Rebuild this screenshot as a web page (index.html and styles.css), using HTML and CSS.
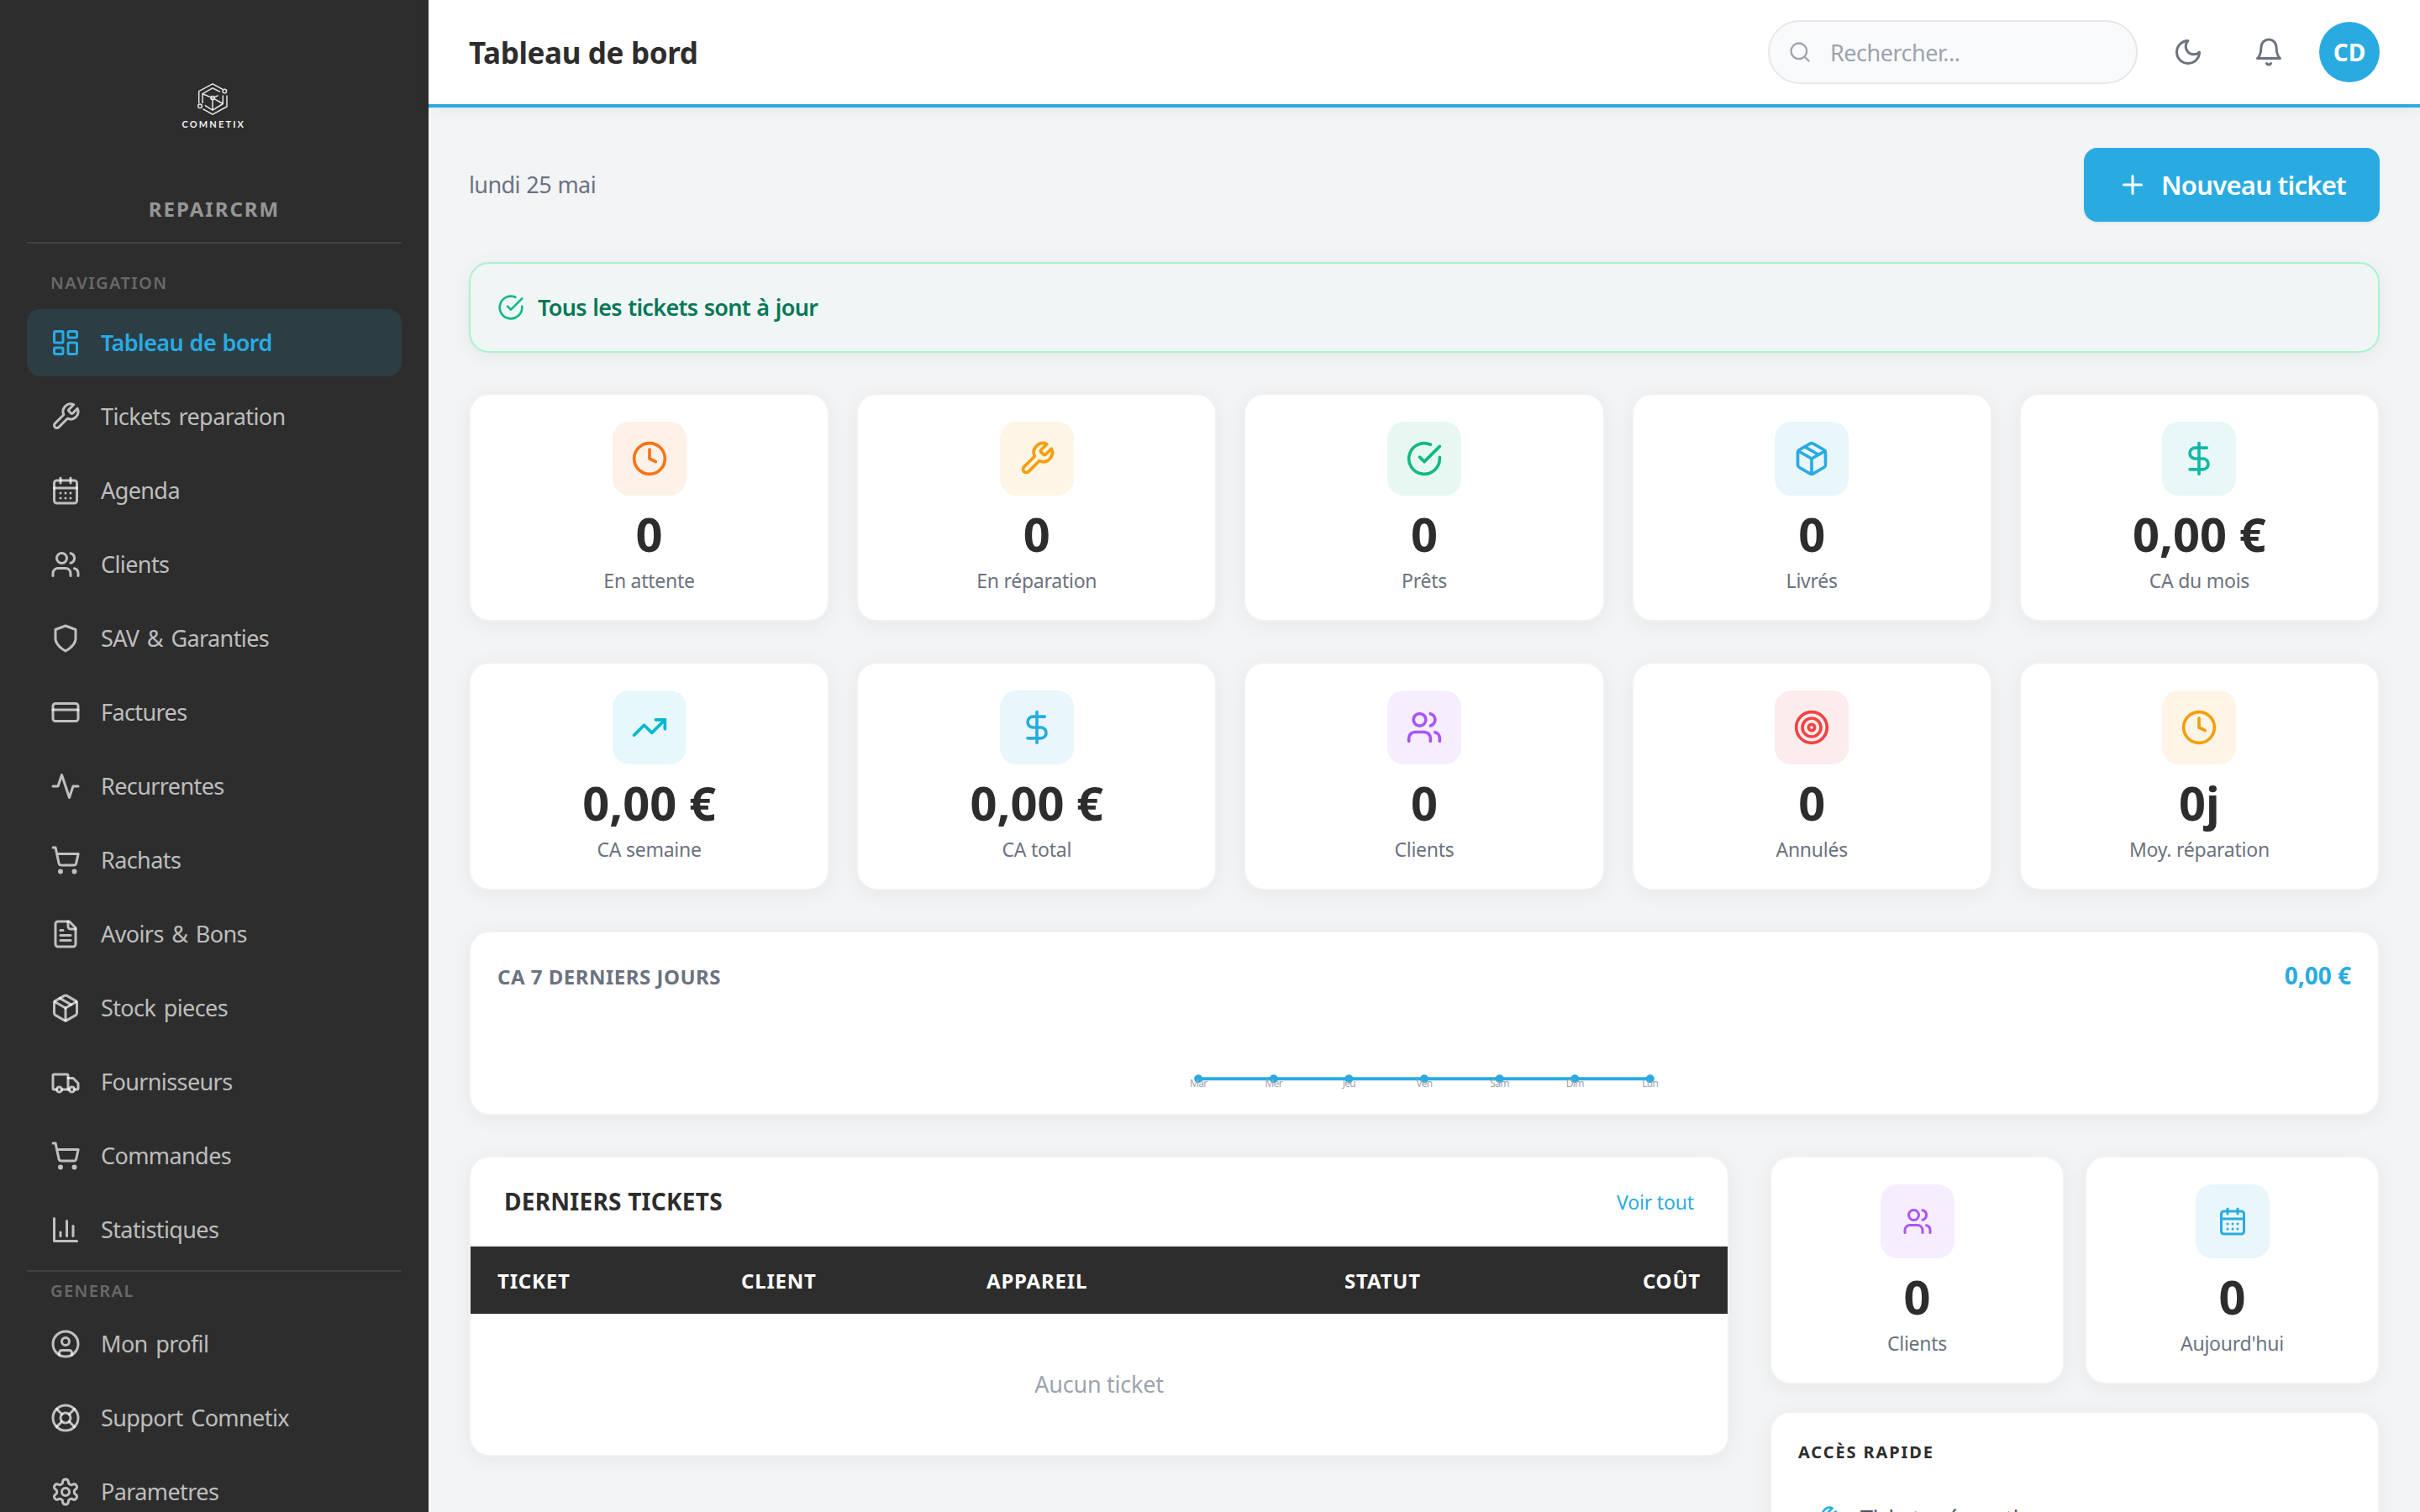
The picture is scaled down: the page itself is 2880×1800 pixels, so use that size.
FILE: index.html
```html
<!DOCTYPE html>
<html lang="fr">

<head>
    <meta charset="UTF-8" />
    <meta name="viewport" content="width=device-width, initial-scale=1.0" />
    <title>Tableau de bord - RepairCRM</title>

    <link rel="stylesheet" href="styles.css">
</head>

<body>

    <!-- Icons -->
    <svg class="sprite">
        <symbol id="i-dashboard" viewBox="0 0 24 24"><rect width="7" height="9" x="3" y="3" rx="1" /><rect width="7" height="5" x="14" y="3" rx="1" /><rect width="7" height="9" x="14" y="12" rx="1" /><rect width="7" height="5" x="3" y="16" rx="1" /></symbol>
        <symbol id="i-wrench" viewBox="0 0 24 24"><path d="M14.7 6.3a1 1 0 0 0 0 1.4l1.6 1.6a1 1 0 0 0 1.4 0l3.77-3.77a6 6 0 0 1-7.94 7.94l-6.91 6.91a2.12 2.12 0 0 1-3-3l6.91-6.91a6 6 0 0 1 7.94-7.94l-3.76 3.76z" /></symbol>
        <symbol id="i-calendar" viewBox="0 0 24 24"><path d="M8 2v4" /><path d="M16 2v4" /><rect width="18" height="18" x="3" y="4" rx="2" /><path d="M3 10h18" /><path d="M8 14h.01" /><path d="M12 14h.01" /><path d="M16 14h.01" /><path d="M8 18h.01" /><path d="M12 18h.01" /><path d="M16 18h.01" /></symbol>
        <symbol id="i-users" viewBox="0 0 24 24"><path d="M16 21v-2a4 4 0 0 0-4-4H6a4 4 0 0 0-4 4v2" /><circle cx="9" cy="7" r="4" /><path d="M22 21v-2a4 4 0 0 0-3-3.87" /><path d="M16 3.13a4 4 0 0 1 0 7.75" /></symbol>
        <symbol id="i-shield" viewBox="0 0 24 24"><path d="M12 22s8-4 8-10V5l-8-3-8 3v7c0 6 8 10 8 10" /></symbol>
        <symbol id="i-card" viewBox="0 0 24 24"><rect width="20" height="14" x="2" y="5" rx="2" /><path d="M2 10h20" /></symbol>
        <symbol id="i-activity" viewBox="0 0 24 24"><path d="M22 12h-4l-3 9L9 3l-3 9H2" /></symbol>
        <symbol id="i-cart" viewBox="0 0 24 24"><circle cx="8" cy="21" r="1" /><circle cx="19" cy="21" r="1" /><path d="M2.05 2.05h2l2.66 12.42a2 2 0 0 0 2 1.58h9.78a2 2 0 0 0 1.95-1.57l1.65-7.43H5.12" /></symbol>
        <symbol id="i-file" viewBox="0 0 24 24"><path d="M15 2H6a2 2 0 0 0-2 2v16a2 2 0 0 0 2 2h12a2 2 0 0 0 2-2V7Z" /><path d="M14 2v4a2 2 0 0 0 2 2h4" /><path d="M10 9H8" /><path d="M16 13H8" /><path d="M16 17H8" /></symbol>
        <symbol id="i-package" viewBox="0 0 24 24"><path d="m7.5 4.27 9 5.15" /><path d="M21 8a2 2 0 0 0-1-1.73l-7-4a2 2 0 0 0-2 0l-7 4A2 2 0 0 0 3 8v8a2 2 0 0 0 1 1.73l7 4a2 2 0 0 0 2 0l7-4A2 2 0 0 0 21 16Z" /><path d="m3.3 7 8.7 5 8.7-5" /><path d="M12 22V12" /></symbol>
        <symbol id="i-truck" viewBox="0 0 24 24"><path d="M5 18H3c-.6 0-1-.4-1-1V7c0-.6.4-1 1-1h10c.6 0 1 .4 1 1v11" /><path d="M14 9h4l4 4v4c0 .6-.4 1-1 1h-2" /><circle cx="7" cy="18" r="2" /><path d="M15 18H9" /><circle cx="17" cy="18" r="2" /></symbol>
        <symbol id="i-chart" viewBox="0 0 24 24"><path d="M3 3v18h18" /><path d="M18 17V9" /><path d="M13 17V5" /><path d="M8 17v-3" /></symbol>
        <symbol id="i-user" viewBox="0 0 24 24"><circle cx="12" cy="12" r="10" /><circle cx="12" cy="10" r="3" /><path d="M7 20.662V19a2 2 0 0 1 2-2h6a2 2 0 0 1 2 2v1.662" /></symbol>
        <symbol id="i-support" viewBox="0 0 24 24"><circle cx="12" cy="12" r="10" /><path d="m4.93 4.93 4.24 4.24" /><path d="m14.83 9.17 4.24-4.24" /><path d="m14.83 14.83 4.24 4.24" /><path d="m9.17 14.83-4.24 4.24" /><circle cx="12" cy="12" r="4" /></symbol>
        <symbol id="i-settings" viewBox="0 0 24 24"><path d="M12.22 2h-.44a2 2 0 0 0-2 2v.18a2 2 0 0 1-1 1.73l-.43.25a2 2 0 0 1-2 0l-.15-.08a2 2 0 0 0-2.73.73l-.22.38a2 2 0 0 0 .73 2.73l.15.1a2 2 0 0 1 1 1.72v.51a2 2 0 0 1-1 1.74l-.15.09a2 2 0 0 0-.73 2.73l.22.38a2 2 0 0 0 2.73.73l.15-.08a2 2 0 0 1 2 0l.43.25a2 2 0 0 1 1 1.73V20a2 2 0 0 0 2 2h.44a2 2 0 0 0 2-2v-.18a2 2 0 0 1 1-1.73l.43-.25a2 2 0 0 1 2 0l.15.08a2 2 0 0 0 2.73-.73l.22-.39a2 2 0 0 0-.73-2.73l-.15-.08a2 2 0 0 1-1-1.74v-.5a2 2 0 0 1 1-1.74l.15-.09a2 2 0 0 0 .73-2.73l-.22-.38a2 2 0 0 0-2.73-.73l-.15.08a2 2 0 0 1-2 0l-.43-.25a2 2 0 0 1-1-1.73V4a2 2 0 0 0-2-2z" /><circle cx="12" cy="12" r="3" /></symbol>
        <symbol id="i-search" viewBox="0 0 24 24"><circle cx="11" cy="11" r="8" /><path d="m21 21-4.3-4.3" /></symbol>
        <symbol id="i-moon" viewBox="0 0 24 24"><path d="M12 3a6 6 0 0 0 9 9 9 9 0 1 1-9-9Z" /></symbol>
        <symbol id="i-bell" viewBox="0 0 24 24"><path d="M6 8a6 6 0 0 1 12 0c0 7 3 9 3 9H3s3-2 3-9" /><path d="M10.3 21a1.94 1.94 0 0 0 3.4 0" /></symbol>
        <symbol id="i-plus" viewBox="0 0 24 24"><path d="M5 12h14" /><path d="M12 5v14" /></symbol>
        <symbol id="i-check" viewBox="0 0 24 24"><path d="M22 11.08V12a10 10 0 1 1-5.93-9.14" /><path d="m9 11 3 3L22 4" /></symbol>
        <symbol id="i-clock" viewBox="0 0 24 24"><circle cx="12" cy="12" r="10" /><path d="M12 6v6l4 2" /></symbol>
        <symbol id="i-dollar" viewBox="0 0 24 24"><path d="M12 2v20" /><path d="M17 5H9.5a3.5 3.5 0 0 0 0 7h5a3.5 3.5 0 0 1 0 7H6" /></symbol>
        <symbol id="i-trending" viewBox="0 0 24 24"><path d="m22 7-8.5 8.5-5-5L2 17" /><path d="M16 7h6v6" /></symbol>
        <symbol id="i-target" viewBox="0 0 24 24"><circle cx="12" cy="12" r="10" /><circle cx="12" cy="12" r="6" /><circle cx="12" cy="12" r="2" /></symbol>
    </svg>

    <aside class="sidebar">
        <div class="brand">
            <svg class="logo" viewBox="0 0 88 60">
                <path d="M54 12.3 42 5.8 25.7 14.6V29M59 19.6V33L42 42.2 30.3 35.7" />
                <path d="M51 15.4 42 10.8 30 17.7V29M30 17.7 42 22.6 54.3 29.5M54.3 19.6V29.5L42 37.2 32.7 31.4M42 25V37.2M44 21.8 48.7 19.6" />
                <circle cx="56.3" cy="14.6" r="2.3" />
                <circle cx="27" cy="32.2" r="2.3" />
                <circle cx="42" cy="22.6" r="2.2" />
                <text x="5.5" y="57.6">COMNETIX</text>
            </svg>
            <p class="brand-name">REPAIRCRM</p>
        </div>

        <p class="nav-title">NAVIGATION</p>
        <nav class="nav">
            <a class="nav-item active"><svg class="icon"><use href="#i-dashboard" /></svg>Tableau de bord</a>
            <a class="nav-item"><svg class="icon"><use href="#i-wrench" /></svg>Tickets reparation</a>
            <a class="nav-item"><svg class="icon"><use href="#i-calendar" /></svg>Agenda</a>
            <a class="nav-item"><svg class="icon"><use href="#i-users" /></svg>Clients</a>
            <a class="nav-item"><svg class="icon"><use href="#i-shield" /></svg>SAV &amp; Garanties</a>
            <a class="nav-item"><svg class="icon"><use href="#i-card" /></svg>Factures</a>
            <a class="nav-item"><svg class="icon"><use href="#i-activity" /></svg>Recurrentes</a>
            <a class="nav-item"><svg class="icon"><use href="#i-cart" /></svg>Rachats</a>
            <a class="nav-item"><svg class="icon"><use href="#i-file" /></svg>Avoirs &amp; Bons</a>
            <a class="nav-item"><svg class="icon"><use href="#i-package" /></svg>Stock pieces</a>
            <a class="nav-item"><svg class="icon"><use href="#i-truck" /></svg>Fournisseurs</a>
            <a class="nav-item"><svg class="icon"><use href="#i-cart" /></svg>Commandes</a>
            <a class="nav-item"><svg class="icon"><use href="#i-chart" /></svg>Statistiques</a>
        </nav>

        <p class="nav-title general">GENERAL</p>
        <nav class="nav">
            <a class="nav-item"><svg class="icon"><use href="#i-user" /></svg>Mon profil</a>
            <a class="nav-item"><svg class="icon"><use href="#i-support" /></svg>Support Comnetix</a>
            <a class="nav-item"><svg class="icon"><use href="#i-settings" /></svg>Parametres</a>
        </nav>
    </aside>

    <div class="page">
        <header class="topbar">
            <h1>Tableau de bord</h1>
            <div class="search"><svg class="icon"><use href="#i-search" /></svg>Rechercher...</div>
            <button class="icon-btn"><svg class="icon"><use href="#i-moon" /></svg></button>
            <button class="icon-btn"><svg class="icon"><use href="#i-bell" /></svg></button>
            <div class="avatar">CD</div>
        </header>

        <main>
            <div class="intro">
                <span class="date">lundi 25 mai</span>
                <button class="new-btn"><svg class="icon"><use href="#i-plus" /></svg>Nouveau ticket</button>
            </div>

            <div class="alert"><svg class="icon"><use href="#i-check" /></svg>Tous les tickets sont à jour</div>

            <!-- Stats -->
            <section class="stats">
                <div class="card stat">
                    <div class="tile orange"><svg class="icon"><use href="#i-clock" /></svg></div>
                    <strong>0</strong><span>En attente</span>
                </div>
                <div class="card stat">
                    <div class="tile amber"><svg class="icon"><use href="#i-wrench" /></svg></div>
                    <strong>0</strong><span>En réparation</span>
                </div>
                <div class="card stat">
                    <div class="tile green"><svg class="icon"><use href="#i-check" /></svg></div>
                    <strong>0</strong><span>Prêts</span>
                </div>
                <div class="card stat">
                    <div class="tile blue"><svg class="icon"><use href="#i-package" /></svg></div>
                    <strong>0</strong><span>Livrés</span>
                </div>
                <div class="card stat">
                    <div class="tile teal"><svg class="icon"><use href="#i-dollar" /></svg></div>
                    <strong>0,00 €</strong><span>CA du mois</span>
                </div>
                <div class="card stat">
                    <div class="tile cyan"><svg class="icon"><use href="#i-trending" /></svg></div>
                    <strong>0,00 €</strong><span>CA semaine</span>
                </div>
                <div class="card stat">
                    <div class="tile blue"><svg class="icon"><use href="#i-dollar" /></svg></div>
                    <strong>0,00 €</strong><span>CA total</span>
                </div>
                <div class="card stat">
                    <div class="tile purple"><svg class="icon"><use href="#i-users" /></svg></div>
                    <strong>0</strong><span>Clients</span>
                </div>
                <div class="card stat">
                    <div class="tile red"><svg class="icon"><use href="#i-target" /></svg></div>
                    <strong>0</strong><span>Annulés</span>
                </div>
                <div class="card stat">
                    <div class="tile amber"><svg class="icon"><use href="#i-clock" /></svg></div>
                    <strong>0j</strong><span>Moy. réparation</span>
                </div>
            </section>

            <!-- Revenue chart -->
            <section class="card revenue">
                <div class="revenue-head">
                    <h2>CA 7 DERNIERS JOURS</h2>
                    <span class="total">0,00 €</span>
                </div>
                <svg class="chart" viewBox="0 0 600 100">
                    <path d="M31.2 90.3H568.8" />
                    <circle cx="31.2" cy="90.3" r="5" />
                    <circle cx="120.8" cy="90.3" r="5" />
                    <circle cx="210.4" cy="90.3" r="5" />
                    <circle cx="300" cy="90.3" r="5" />
                    <circle cx="389.6" cy="90.3" r="5" />
                    <circle cx="479.2" cy="90.3" r="5" />
                    <circle cx="568.8" cy="90.3" r="5" />
                    <text x="31.2" y="100.3">Mar</text>
                    <text x="120.8" y="100.3">Mer</text>
                    <text x="210.4" y="100.3">Jeu</text>
                    <text x="300" y="100.3">Ven</text>
                    <text x="389.6" y="100.3">Sam</text>
                    <text x="479.2" y="100.3">Dim</text>
                    <text x="568.8" y="100.3">Lun</text>
                </svg>
            </section>

            <div class="columns">
                <section class="card tickets">
                    <div class="tickets-head">
                        <h2>DERNIERS TICKETS</h2>
                        <a>Voir tout</a>
                    </div>
                    <table>
                        <thead>
                            <tr>
                                <th class="c-ticket">TICKET</th>
                                <th class="c-client">CLIENT</th>
                                <th class="c-device">APPAREIL</th>
                                <th class="c-status">STATUT</th>
                                <th class="c-cost">COÛT</th>
                            </tr>
                        </thead>
                        <tbody>
                            <tr>
                                <td colspan="5">Aucun ticket</td>
                            </tr>
                        </tbody>
                    </table>
                </section>

                <div class="side">
                    <div class="side-stats">
                        <div class="card stat small">
                            <div class="tile purple"><svg class="icon"><use href="#i-users" /></svg></div>
                            <strong>0</strong><span>Clients</span>
                        </div>
                        <div class="card stat small">
                            <div class="tile blue"><svg class="icon"><use href="#i-calendar" /></svg></div>
                            <strong>0</strong><span>Aujourd'hui</span>
                        </div>
                    </div>
                    <section class="card quick">
                        <h2>ACCÈS RAPIDE</h2>
                        <a class="quick-item"><svg class="icon"><use href="#i-wrench" /></svg>Tickets réparation</a>
                    </section>
                </div>
            </div>
        </main>
    </div>

</body>

</html>
```
FILE: styles.css
```css
* {
    margin: 0;
    padding: 0;
    box-sizing: border-box;
}

body {
    display: flex;
    height: 100vh;
    overflow: hidden;
    background: #f3f4f6;
    color: #2d2d2d;
    font-family: "Noto Sans", "Open Sans", sans-serif;
    font-size: 27px;
}

button {
    border: none;
    background: none;
    font-family: inherit;
}

.sprite {
    display: none;
}

.icon {
    width: 36px;
    height: 36px;
    flex-shrink: 0;
    fill: none;
    stroke: currentColor;
    stroke-width: 2;
    stroke-linecap: round;
    stroke-linejoin: round;
}

/* Sidebar */
.sidebar {
    width: 510px;
    height: 100vh;
    flex-shrink: 0;
    padding: 94px 32px 0;
    overflow: hidden;
    background: #2d2d2d;
}

.brand {
    display: flex;
    flex-direction: column;
    align-items: center;
    padding-bottom: 23px;
    border-bottom: 2px solid rgba(255, 255, 255, 0.1);
}

.logo {
    width: 88px;
    height: 60px;
    overflow: visible;
    fill: none;
    stroke: #e6e6e6;
    stroke-width: 1.5;
}

.logo text {
    fill: #f0f0f0;
    stroke: none;
    font-family: Lato, sans-serif;
    font-size: 11px;
    font-weight: 700;
    letter-spacing: 2.15px;
}

.brand-name {
    margin-top: 79px;
    color: rgba(255, 255, 255, 0.5);
    font-size: 24px;
    font-weight: 700;
    line-height: 32px;
    letter-spacing: 2px;
}

.nav-title {
    padding: 33px 28px 17px;
    color: rgba(255, 255, 255, 0.3);
    font-size: 20px;
    font-weight: 600;
    line-height: 28px;
    letter-spacing: 1.4px;
}

.nav-title.general {
    margin-top: 8px;
    padding: 9px 28px;
    border-top: 2px solid rgba(255, 255, 255, 0.1);
}

.nav {
    display: flex;
    flex-direction: column;
    gap: 8px;
}

.nav-item {
    display: flex;
    align-items: center;
    gap: 24px;
    height: 80px;
    padding: 0 28px 1px;
    border-radius: 16px;
    color: rgba(255, 255, 255, 0.7);
    letter-spacing: -0.6px;
    word-spacing: 3px;
}

/* keeps the icon centred, the label sits slightly higher */
.nav-item .icon,
.alert .icon,
.quick-item .icon {
    margin-top: 1px;
}

.nav-item.active {
    background: rgba(41, 171, 226, 0.13);
    color: #29abe2;
    font-weight: 600;
    word-spacing: 1px;
}

/* Top bar */
.page {
    flex: 1;
    min-width: 0;
}

.topbar {
    display: flex;
    align-items: center;
    gap: 24px;
    height: 128px;
    padding: 0 48px;
    background: #fff;
    border-bottom: 4px solid #29abe2;
    box-shadow: 0 2px 16px rgba(0, 0, 0, 0.06);
}

.topbar h1 {
    flex: 1;
    font-size: 35px;
    font-weight: 700;
    letter-spacing: -0.35px;
}

.search {
    display: flex;
    align-items: center;
    gap: 22px;
    width: 440px;
    height: 76px;
    padding-left: 22px;
    border: 2px solid #e5e7eb;
    border-radius: 40px;
    background: #f9fafb;
    color: #9ca3af;
    letter-spacing: -0.5px;
}

.search .icon {
    width: 28px;
    height: 28px;
}

.icon-btn {
    display: flex;
    align-items: center;
    justify-content: center;
    width: 72px;
    height: 72px;
    color: #6b7280;
}

.avatar {
    width: 72px;
    height: 72px;
    border-radius: 50%;
    background: #29abe2;
    color: #fff;
    font-size: 28px;
    font-weight: 700;
    line-height: 72px;
    text-align: center;
}

/* Content */
main {
    display: flex;
    flex-direction: column;
    gap: 48px;
    padding: 48px;
}

.intro {
    display: flex;
    align-items: center;
    justify-content: space-between;
}

.date {
    padding-bottom: 2px;
    color: #6b7280;
    letter-spacing: -0.6px;
    word-spacing: 1px;
}

.new-btn {
    display: flex;
    align-items: center;
    gap: 16px;
    width: 352px;
    height: 88px;
    padding-left: 40px;
    border-radius: 16px;
    background: #29abe2;
    color: #fff;
    font-size: 31px;
    font-weight: 600;
    letter-spacing: -0.75px;
    white-space: nowrap;
    box-shadow: 0 2px 4px rgba(0, 0, 0, 0.06);
}

.alert {
    display: flex;
    align-items: center;
    gap: 16px;
    height: 108px;
    padding: 0 32px 1px;
    border: 2px solid #a7f3d0;
    border-radius: 24px;
    background: #f0f6f6;
    color: #047857;
    font-weight: 600;
    letter-spacing: -0.7px;
    word-spacing: 1px;
    box-shadow: 0 4px 24px rgba(0, 0, 0, 0.06);
}

.alert .icon {
    width: 32px;
    height: 32px;
    color: #10b981;
}

.card {
    background: #fff;
    border: 2px solid #f0f1f2;
    border-radius: 24px;
    box-shadow: 0 4px 24px rgba(0, 0, 0, 0.06);
}

.stats {
    display: grid;
    grid-template-columns: repeat(5, 1fr);
    gap: 48px 32px;
}

.stat {
    display: flex;
    flex-direction: column;
    align-items: center;
    height: 272px;
    padding-top: 32px;
}

.stat strong {
    margin: 14px 0 10px;
    font-size: 56px;
    line-height: 62px;
}

.stat span {
    color: #6b7280;
    font-size: 23px;
    line-height: 30px;
    letter-spacing: -0.25px;
}

.tile {
    display: flex;
    align-items: center;
    justify-content: center;
    width: 88px;
    height: 88px;
    border-radius: 20px;
}

.tile .icon {
    width: 44px;
    height: 44px;
}

.small .tile .icon {
    width: 36px;
    height: 36px;
}

.orange {
    background: #fef1e8;
    color: #f97316;
}

.amber {
    background: #fef5e7;
    color: #f59e0b;
}

.green {
    background: #e7f8f2;
    color: #10b981;
}

.blue {
    background: #e9f6fc;
    color: #29abe2;
}

.teal {
    background: #e7f8f6;
    color: #14b8a6;
}

.cyan {
    background: #e6f8fb;
    color: #06b6d4;
}

.purple {
    background: #f6eefe;
    color: #a855f7;
}

.red {
    background: #fdecec;
    color: #ef4444;
}

/* Revenue chart */
.revenue {
    height: 220px;
    padding: 32px;
}

.revenue-head {
    display: flex;
    justify-content: space-between;
    height: 42px;
    margin-bottom: 10px;
    line-height: 42px;
}

.revenue h2 {
    color: #6b7280;
    font-size: 24px;
    letter-spacing: 0.5px;
}

.total {
    color: #29abe2;
    font-size: 28px;
    font-weight: 700;
    line-height: 39px;
}

.chart {
    display: block;
    width: 100%;
    height: 100px;
    overflow: visible;
}

.chart path {
    stroke: #29abe2;
    stroke-width: 4;
}

.chart circle {
    fill: #29abe2;
}

.chart text {
    fill: #9ca3af;
    font-size: 12px;
    letter-spacing: -0.7px;
    text-anchor: middle;
}

/* Tickets and side column */
.columns {
    display: grid;
    grid-template-columns: 1500px 1fr;
    align-items: start;
    gap: 48px;
}

.tickets {
    overflow: hidden;
}

.tickets-head {
    display: flex;
    align-items: center;
    justify-content: space-between;
    height: 106px;
    padding: 0 40px;
    border-bottom: 2px solid #f0f0f0;
}

.tickets-head h2 {
    font-size: 28px;
    letter-spacing: 0.25px;
}

.tickets-head a {
    padding-top: 2px;
    color: #29abe2;
    font-size: 23px;
    letter-spacing: -0.15px;
}

table {
    width: 100%;
    table-layout: fixed;
    border-collapse: collapse;
}

th {
    height: 80px;
    padding: 0 32px;
    background: #2d2d2d;
    color: #fff;
    font-size: 24px;
    letter-spacing: 0.8px;
    text-align: left;
}

.c-ticket {
    width: 290px;
}

.c-client {
    width: 292px;
}

.c-device {
    width: 426px;
}

.c-status {
    width: 354px;
}

.c-cost {
    padding-left: 0;
    text-align: right;
}

td {
    height: 168px;
    padding-bottom: 2px;
    color: #9ca3af;
    letter-spacing: -0.25px;
    text-align: center;
}

.side {
    display: flex;
    flex-direction: column;
    gap: 32px;
}

.side-stats {
    display: grid;
    grid-template-columns: 1fr 1fr;
    gap: 24px;
}

.quick {
    padding: 32px;
}

.quick h2 {
    margin-bottom: 24px;
    font-size: 20px;
    line-height: 30px;
    letter-spacing: 1.9px;
}

.quick-item {
    display: flex;
    align-items: center;
    gap: 26px;
    height: 80px;
    padding: 0 16px 1px;
    color: #4b5563;
    letter-spacing: -0.6px;
    word-spacing: 3px;
}

.quick-item .icon {
    width: 32px;
    height: 32px;
    color: #29abe2;
}
```
